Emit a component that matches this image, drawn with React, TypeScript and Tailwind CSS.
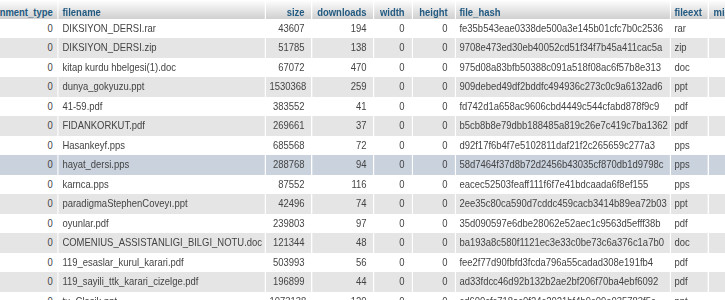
// Reference text is a horizontally squeezed Arial, so the table is laid out
// wide and scaled down on x.
const columns = [
  { key: "type", label: "assignment_type", w: "w-[120px]", align: "text-right", pad: "pl-[4.7px] pr-[5.6px]" },
  { key: "filename", label: "filename", w: "w-[240.7px]", align: "text-left", pad: "pl-[4.7px] pr-[8.1px]" },
  { key: "size", label: "size", w: "w-[54.7px]", align: "text-right", pad: "pl-[4.7px] pr-[8.1px]" },
  { key: "downloads", label: "downloads", w: "w-[72.1px]", align: "text-right", pad: "pl-[4.7px] pr-[8.1px]" },
  { key: "width", label: "width", w: "w-[44.2px]", align: "text-right", pad: "pl-[4.7px] pr-[8.1px]" },
  { key: "height", label: "height", w: "w-[50px]", align: "text-right", pad: "pl-[4.7px] pr-[8.1px]" },
  { key: "hash", label: "file_hash", w: "w-[250px]", align: "text-left", pad: "pl-[4.7px] pr-[8.1px]" },
  { key: "ext", label: "fileext", w: "w-[44.2px]", align: "text-left", pad: "pl-[4.7px] pr-[8.1px]" },
  { key: "mime", label: "mimetype", w: "w-[100px]", align: "text-left", pad: "pl-[6px] pr-[8.1px]" },
];

const rows = [
  ["DIKSIYON_DERSI.rar", "43607", "194", "fe35b543eae0338de500a3e145b01cfc7b0c2536", "rar"],
  ["DIKSIYON_DERSI.zip", "51785", "138", "9708e473ed30eb40052cd51f34f7b45a411cac5a", "zip"],
  ["kitap kurdu hbelgesi(1).doc", "67072", "470", "975d08a83bfb50388c091a518f08ac6f57b8e313", "doc"],
  ["dunya_gokyuzu.ppt", "1530368", "259", "909debed49df2bddfc494936c273c0c9a6132ad6", "ppt"],
  ["41-59.pdf", "383552", "41", "fd742d1a658ac9606cbd4449c544cfabd878f9c9", "pdf"],
  ["FIDANKORKUT.pdf", "269661", "37", "b5cb8b8e79dbb188485a819c26e7c419c7ba1362", "pdf"],
  ["Hasankeyf.pps", "685568", "72", "d92f17f6b4f7e5102811daf21f2c265659c277a3", "pps"],
  ["hayat_dersi.pps", "288768", "94", "58d7464f37d8b72d2456b43035cf870db1d9798c", "pps"],
  ["karnca.pps", "87552", "116", "eacec52503feaff111f6f7e41bdcaada6f8ef155", "pps"],
  ["paradigmaStephenCoveyı.ppt", "42496", "74", "2ee35c80ca590d7cddc459cacb3414b89ea72b03", "ppt"],
  ["oyunlar.pdf", "239803", "97", "35d090597e6dbe28062e52aec1c9563d5efff38b", "pdf"],
  ["COMENIUS_ASSISTANLIGI_BILGI_NOTU.doc", "121344", "48", "ba193a8c580f1121ec3e33c0be73c6a376c1a7b0", "doc"],
  ["119_esaslar_kurul_karari.pdf", "503993", "56", "fee2f77d90fbfd3fcda796a55cadad308e191fb4", "pdf"],
  ["119_sayili_ttk_karari_cizelge.pdf", "196899", "44", "ad33fdcc46d92b132b2ae2bf206f70ba4ebf6092", "pdf"],
  ["tu_Clasik.ppt", "1073138", "120", "cd600cfc718ac0f24c2021bf4b9c09e035783f5c", "ppt"],
];

const HIGHLIGHT = 7;

export default function App() {
  return (
    <div className="w-[725px] h-[300px] overflow-hidden bg-white font-['Liberation_Sans',Arial,sans-serif] text-[11px] text-[#444]">
      <div className="origin-top-left scale-x-[0.86]">
        <table className="table-fixed border-collapse ml-[-52.6px] w-[975.9px]">
          <thead>
            <tr className="bg-gradient-to-b from-white to-[#cfcfcf]">
              {columns.map((c) => (
                <th
                  key={c.key}
                  className={`${c.w} ${c.align} ${c.pad} h-[18.5px] pt-[6px] pb-0 leading-none font-bold text-[#235a81] whitespace-nowrap overflow-hidden border-r border-white`}
                >
                  {c.label}
                </th>
              ))}
            </tr>
          </thead>
          <tbody>
            {rows.map((r, i) => {
              const bg =
                i === HIGHLIGHT ? "bg-[#c9d2dd]" : i % 2 === 0 ? "bg-white" : "bg-[#e5e5e5]";
              const cells = ["0", r[0], r[1], r[2], "0", "0", r[3], r[4], ""];
              return (
                <tr key={i} className={bg}>
                  {cells.map((v, j) => (
                    <td
                      key={j}
                      className={`${columns[j].align} ${columns[j].pad} h-[19.5px] py-0 leading-none whitespace-nowrap overflow-hidden border-r border-white`}
                    >
                      {v}
                    </td>
                  ))}
                </tr>
              );
            })}
          </tbody>
        </table>
      </div>
    </div>
  );
}
